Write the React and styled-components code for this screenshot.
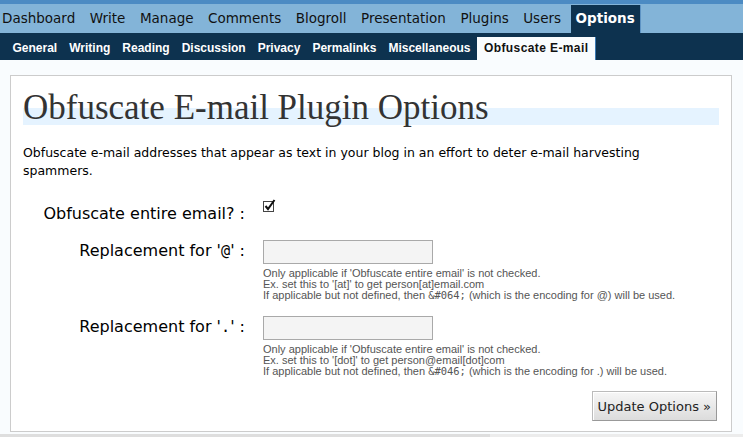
import React from "react";
import styled, { createGlobalStyle } from "styled-components";

const GlobalStyle = createGlobalStyle`
  html, body {
    margin: 0;
    padding: 0;
    background: #f9fcfe;
    font-family: "DejaVu Sans", "Liberation Sans", sans-serif;
    color: #000;
  }
`;

const topItems = [
  "Dashboard",
  "Write",
  "Manage",
  "Comments",
  "Blogroll",
  "Presentation",
  "Plugins",
  "Users",
  "Options",
];

const subItems = [
  "General",
  "Writing",
  "Reading",
  "Discussion",
  "Privacy",
  "Permalinks",
  "Miscellaneous",
  "Obfuscate E-mail",
];

const App = () => {
  return (
    <>
      <GlobalStyle />
      <HeadStrip />
      <AdminMenu>
        {topItems.map((item) => (
          <MenuItem key={item} $current={item === "Options"}>
            {item}
          </MenuItem>
        ))}
      </AdminMenu>
      <SubMenu>
        {subItems.map((item) => (
          <SubItem key={item} $current={item === "Obfuscate E-mail"}>
            {item}
          </SubItem>
        ))}
      </SubMenu>

      <Wrap>
        <Title>Obfuscate E-mail Plugin Options</Title>
        <Intro>
          Obfuscate e-mail addresses that appear as text in your blog in an
          effort to deter e-mail harvesting spammers.
        </Intro>

        <FormTable>
          <Label>Obfuscate entire email? :</Label>
          <Field>
            <CheckBox>
              <svg width="13" height="13" viewBox="0 0 13 13">
                <rect x="0.5" y="2.5" width="10" height="10" fill="#fff" stroke="#444" />
                <path d="M2.5 7 L5 10 L11.5 1" fill="none" stroke="#111" strokeWidth="2" />
              </svg>
            </CheckBox>
          </Field>

          <Label>
            Replacement for '<Code>@</Code>' :
          </Label>
          <Field>
            <TextInput />
            <Hint>
              Only applicable if 'Obfuscate entire email' is not checked.
              <br />
              Ex. set this to '[at]' to get person[at]email.com
              <br />
              If applicable but not defined, then <Code>{"&#064;"}</Code> (which
              is the encoding for @) will be used.
            </Hint>
          </Field>

          <Label>
            Replacement for '<Code>.</Code>' :
          </Label>
          <Field>
            <TextInput />
            <Hint>
              Only applicable if 'Obfuscate entire email' is not checked.
              <br />
              Ex. set this to '[dot]' to get person@email[dot]com
              <br />
              If applicable but not defined, then <Code>{"&#046;"}</Code> (which
              is the encoding for .) will be used.
            </Hint>
          </Field>
        </FormTable>

        <Submit>
          <Button>Update Options &raquo;</Button>
        </Submit>
      </Wrap>
      <Footer />
    </>
  );
};

const HeadStrip = styled.div`
  height: 4px;
  background: #4c8bc3;
`;

const AdminMenu = styled.ul`
  display: flex;
  align-items: flex-end;
  gap: 3.5px;
  margin: 0;
  padding: 0;
  height: 29px;
  background: #83b4d8;
  list-style: none;
`;

const MenuItem = styled.li`
  height: 28px;
  line-height: 27px;
  padding: 0 5px;
  font-size: 13.5px;
  font-weight: ${(p) => (p.$current ? "bold" : "normal")};
  color: ${(p) => (p.$current ? "#fff" : "#111")};
  background: ${(p) => (p.$current ? "#0d324f" : "transparent")};
  border-right: 1px solid ${(p) => (p.$current ? "#5d93c4" : "transparent")};
  &:first-child {
    margin-left: -3px;
  }
`;

const SubMenu = styled.ul`
  display: flex;
  align-items: flex-end;
  margin: 0;
  padding: 0 0 0 7px;
  height: 27px;
  background: #0d324f;
  list-style: none;
`;

const SubItem = styled.li`
  height: 23px;
  line-height: 22px;
  padding: 0 ${(p) => (p.$current ? "7px" : "5.5px")};
  font-family: "Liberation Sans", Arial, sans-serif;
  font-size: 12px;
  font-weight: bold;
  letter-spacing: ${(p) => (p.$current ? "0.4px" : "0")};
  color: ${(p) => (p.$current ? "#111" : "#fff")};
  background: ${(p) => (p.$current ? "#f9fcfe" : "transparent")};
  border-right: 1px solid ${(p) => (p.$current ? "#3a79b3" : "transparent")};
`;

const Wrap = styled.div`
  margin: 15px 11px 0 10px;
  height: 355px;
  padding: 0 12px;
  background: #fff;
  border: 1px solid #ccc;
`;

const Title = styled.h2`
  margin: 15px 0 0;
  height: 34px;
  line-height: 34px;
  font-family: "Liberation Serif", "Times New Roman", serif;
  font-weight: normal;
  font-size: 35px;
  color: #333;
  background: linear-gradient(to bottom, transparent 50%, #e5f3ff 50%);
`;

const Intro = styled.p`
  margin: 19px 0 0;
  max-width: 640px;
  font-size: 12.5px;
  line-height: 18px;
  color: #000;
`;

const FormTable = styled.div`
  display: grid;
  grid-template-columns: 222px 1fr;
  column-gap: 18px;
  row-gap: 15px;
  margin-top: 23px;
`;

const Label = styled.div`
  text-align: right;
  font-size: 16px;
  line-height: 22px;
  color: #000;
  white-space: nowrap;
`;

const Field = styled.div`
  display: flex;
  flex-direction: column;
  align-items: flex-start;
`;

const CheckBox = styled.span`
  display: block;
  width: 13px;
  height: 13px;
  margin-top: -6px;
`;

const TextInput = styled.input.attrs({ type: "text" })`
  box-sizing: border-box;
  width: 170px;
  height: 24px;
  margin: 0;
  background: #f4f4f4;
  border: 1px solid #a9a9a9;
`;

const Hint = styled.div`
  margin-top: 4px;
  font-family: "Liberation Sans", Arial, sans-serif;
  font-size: 11px;
  line-height: 11px;
  color: #555;
`;

const Code = styled.span`
  font-family: "DejaVu Sans Mono", "Liberation Mono", monospace;
  font-size: 0.95em;
`;

const Submit = styled.div`
  display: flex;
  justify-content: flex-end;
  margin-top: 14px;
  padding-right: 2px;
`;

const Button = styled.button`
  height: 30px;
  padding: 0 5px;
  font-family: "DejaVu Sans", sans-serif;
  font-size: 13px;
  color: #222;
  background: linear-gradient(to bottom, #f6f6f6, #dcdcdc);
  border: 1px solid #999;
  border-top-color: #bbb;
  border-left-color: #bbb;
  box-shadow: inset 1px 1px 0 #fff;
`;

const Footer = styled.div`
  margin-top: 2px;
  height: 4px;
  background: linear-gradient(to right, #dedede 0 490px, #ececec 490px);
`;

export default App;
